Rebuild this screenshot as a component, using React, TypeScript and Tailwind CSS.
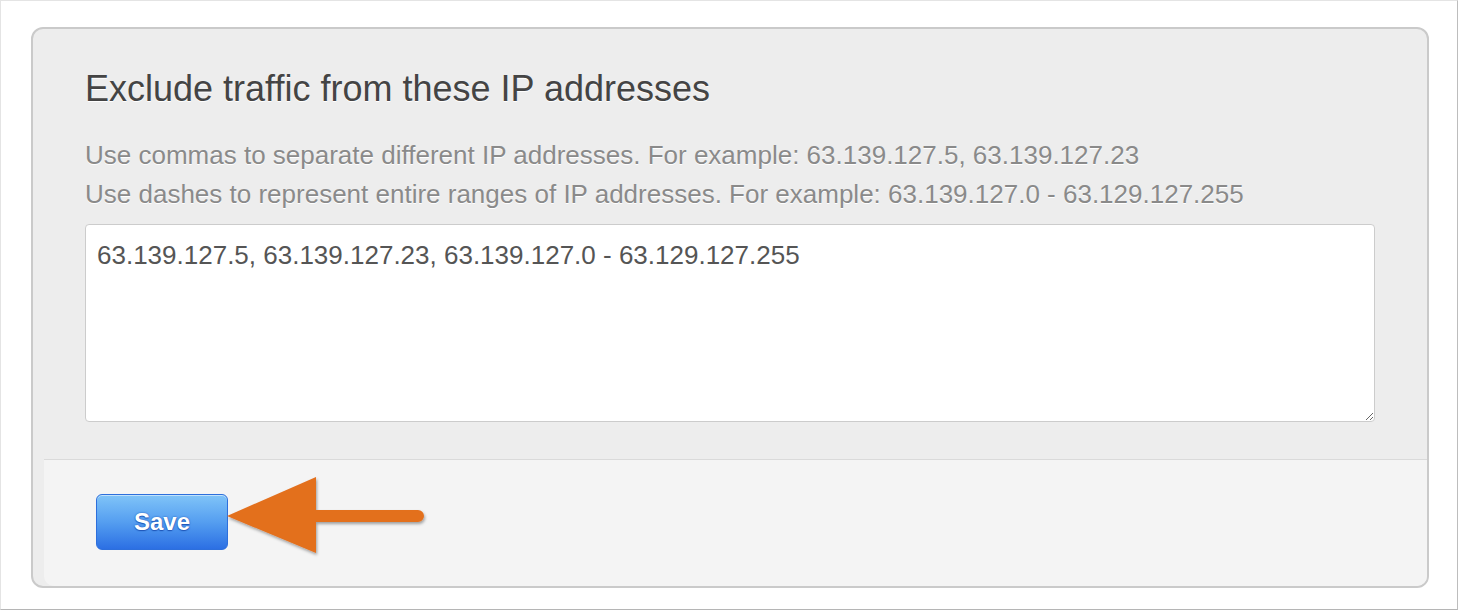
import React from 'react';

const IPS = '63.139.127.5, 63.139.127.23, 63.139.127.0 - 63.129.127.255';

const Arrow: React.FC = () => (
  <svg
    width="220"
    height="100"
    viewBox="0 0 220 100"
    className="absolute left-[176px] top-[10px] pointer-events-none"
  >
    <defs>
      <filter id="arrowShadow" x="-20%" y="-20%" width="140%" height="150%">
        <feDropShadow dx="1" dy="2" stdDeviation="1.5" floodColor="#000" floodOpacity="0.35" />
      </filter>
    </defs>
    <g filter="url(#arrowShadow)" fill="#e36f1e">
      <path d="M7 46 L96 7 L96 40 L198 40 A6 6 0 0 1 198 52 L96 52 L96 83 Z" />
    </g>
  </svg>
);

const App: React.FC = () => {
  return (
    <div className="w-[1460px] h-[612px] bg-white font-['Liberation_Sans',Arial,sans-serif]">
      <div className="w-[1458px] h-[610px] border border-[#e4e4e4] border-r-[#bdbdbd] border-b-[#b5b5b5] pl-[30px] pt-[26px]">
        <div className="w-[1398px] h-[561px] flex flex-col rounded-[12px] border-2 border-[#cacaca] bg-[#ededed] overflow-hidden">
          <div className="px-[52px] pt-[39px] pb-[37px]">
            <h2 className="text-[36px] leading-[42px] text-[#444] [text-shadow:0_1px_0_#fff]">
              Exclude traffic from these IP addresses
            </h2>
            <div className="mt-[26px] text-[26px] leading-[39px] text-[#8a8a8a] [text-shadow:0_1px_0_#fff]">
              <p>Use commas to separate different IP addresses. For example: 63.139.127.5, 63.139.127.23</p>
              <p>Use dashes to represent entire ranges of IP addresses. For example: 63.139.127.0 - 63.129.127.255</p>
            </div>
            <textarea
              defaultValue={IPS}
              className="mt-[10px] block w-full h-[198px] rounded-[4px] border border-[#cccccc] bg-white px-[11px] pt-[15px] text-[26px] leading-[30px] text-[#555] outline-none resize-y font-['Liberation_Sans',Arial,sans-serif]"
            />
          </div>
          <div className="relative flex-1 ml-[11px] border-t border-[#dadada] bg-[#f4f4f4] rounded-bl-[10px] pl-[52px] pt-[34px]">
            <button className="w-[132px] h-[56px] rounded-[6px] border border-[#2d6fdc] bg-gradient-to-b from-[#80c4f8] via-[#559ef0] to-[#2c6fe3] shadow-[inset_0_1px_0_rgba(255,255,255,0.5)] text-white text-[24px] font-bold [text-shadow:0_0_2px_#1f56b8,0_1px_1px_#1f56b8]">
              Save
            </button>
            <Arrow />
          </div>
        </div>
      </div>
    </div>
  );
};

export default App;
